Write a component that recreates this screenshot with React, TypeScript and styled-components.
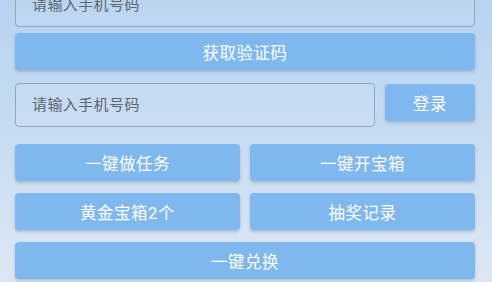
import React from "react";
import styled, { createGlobalStyle } from "styled-components";

const Global = createGlobalStyle`
  html, body { margin: 0; padding: 0; }
  body {
    width: 492px;
    height: 282px;
    overflow: hidden;
    background: linear-gradient(180deg, #b7d3f1 0%, #c6dbf2 45%, #dde7f3 100%);
    font-family: Roboto, "Noto Sans CJK SC", "Noto Sans", sans-serif;
  }
`;

const Page = styled.div`
  display: flex;
  flex-direction: column;
  padding: 0 17px 0 15px;
  margin-top: -17px;
`;

const Input = styled.input<{ $grow?: boolean }>`
  box-sizing: border-box;
  height: 44px;
  width: ${(p) => (p.$grow ? "auto" : "100%")};
  flex: ${(p) => (p.$grow ? "1" : "none")};
  min-width: 0;
  padding: 0 16px;
  border: 1px solid #98a6b6;
  border-radius: 4px;
  background: rgba(255, 255, 255, 0.06);
  font-family: inherit;
  font-size: 15px;
  letter-spacing: 0.4px;
  color: #333;
  outline: none;
  &::placeholder { color: #5e6670; }
`;

const Button = styled.button<{ $mt?: number; $w?: number }>`
  box-sizing: border-box;
  height: 37px;
  margin-top: ${(p) => p.$mt ?? 0}px;
  width: ${(p) => (p.$w ? `${p.$w}px` : "100%")};
  flex: none;
  border: none;
  border-radius: 4px;
  background: #7fb7ef;
  color: #ffffff;
  font-family: inherit;
  font-size: 16.5px;
  letter-spacing: 0.5px;
  box-shadow: 0 2px 3px rgba(60, 80, 110, 0.25);
  cursor: pointer;
  padding: 0;
`;

const Row = styled.div<{ $mt: number; $align?: string }>`
  display: flex;
  gap: 10px;
  margin-top: ${(p) => p.$mt}px;
  align-items: ${(p) => p.$align ?? "stretch"};
`;

const Grid = styled.div`
  display: grid;
  grid-template-columns: 1fr 1fr;
  column-gap: 10px;
  row-gap: 12px;
  margin-top: 17px;
`;

export default function App() {
  return (
    <>
      <Global />
      <Page>
        <Input placeholder="请输入手机号码" />
        <Button $mt={6}>获取验证码</Button>
        <Row $mt={13} $align="flex-start">
          <Input $grow placeholder="请输入手机号码" />
          <Button $w={90} $mt={1}>登录</Button>
        </Row>
        <Grid>
          <Button>一键做任务</Button>
          <Button>一键开宝箱</Button>
          <Button>黄金宝箱2个</Button>
          <Button>抽奖记录</Button>
        </Grid>
        <Button $mt={12}>一键兑换</Button>
      </Page>
    </>
  );
}
